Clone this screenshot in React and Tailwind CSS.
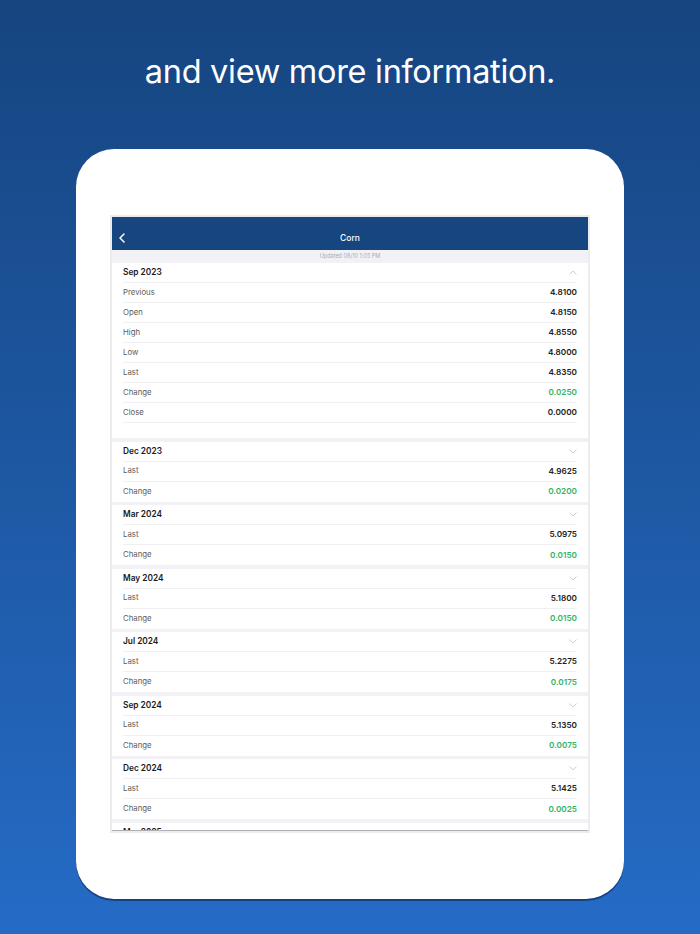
import React from "react";

const sections = [
  {
    title: "Sep 2023",
    open: true,
    rows: [
      ["Previous", "4.8100"],
      ["Open", "4.8150"],
      ["High", "4.8550"],
      ["Low", "4.8000"],
      ["Last", "4.8350"],
      ["Change", "0.0250", true],
      ["Close", "0.0000"],
    ],
  },
  { title: "Dec 2023", rows: [["Last", "4.9625"], ["Change", "0.0200", true]] },
  { title: "Mar 2024", rows: [["Last", "5.0975"], ["Change", "0.0150", true]] },
  { title: "May 2024", rows: [["Last", "5.1800"], ["Change", "0.0150", true]] },
  { title: "Jul 2024", rows: [["Last", "5.2275"], ["Change", "0.0175", true]] },
  { title: "Sep 2024", rows: [["Last", "5.1350"], ["Change", "0.0075", true]] },
  { title: "Dec 2024", rows: [["Last", "5.1425"], ["Change", "0.0025", true]] },
  { title: "Mar 2025", rows: [["Last", "5.1900"], ["Change", "0.0025", true]] },
];

function Chevron({ up }) {
  return (
    <svg width="8" height="5" viewBox="0 0 8 5" className="block">
      <path
        d={up ? "M0.5 4.5 L4 1 L7.5 4.5" : "M0.5 0.5 L4 4 L7.5 0.5"}
        fill="none"
        stroke="#c8c8cc"
        strokeWidth="0.9"
      />
    </svg>
  );
}

function Section({ s, first }) {
  return (
    <div className={first ? "bg-white" : "bg-white mt-[3.5px]"}>
      <div className="ml-[11px] mr-[11px] h-[20px] flex items-center justify-between border-b border-[#f0f0f2]">
        <span className="text-[8.3px] font-semibold text-[#1a1a1a]">{s.title}</span>
        <Chevron up={s.open} />
      </div>
      {s.rows.map((r, i) => {
        const last = i === s.rows.length - 1;
        return (
          <div
            key={r[0]}
            className={
              "ml-[11px] mr-[11px] h-[20px] flex items-center justify-between " +
              (last && !s.open ? "" : "border-b border-[#f0f0f2]")
            }
          >
            <span className="text-[7.8px] text-[#5c5c5c]">{r[0]}</span>
            <span
              className={
                "text-[8.2px] font-semibold " + (r[2] ? "text-[#34b368]" : "text-[#222222]")
              }
            >
              {r[1]}
            </span>
          </div>
        );
      })}
      {s.open && <div className="h-[15px]" />}
    </div>
  );
}

export default function App() {
  return (
    <div
      className="w-full h-[934px] overflow-hidden flex flex-col items-center bg-gradient-to-b from-[#164580] to-[#256bc6]"
      style={{ fontFamily: "Inter, 'Noto Sans', sans-serif" }}
    >
      <h1 className="mt-[50px] h-[44px] leading-[44px] text-white text-[32.5px] font-normal tracking-[-0.3px]">
        and view more information.
      </h1>
      <div className="mt-[55px] w-[548px] h-[750px] rounded-[38px] bg-white pt-[66px] px-[34px] shadow-[0_2px_0_rgba(10,40,90,0.6)]">
        <div className="w-[480px] h-[618px] border-2 border-[#ececee] flex flex-col overflow-hidden">
          <div className="h-[33px] bg-[#164580] flex items-center relative shrink-0 pt-[10px]">
            <svg width="6" height="10" viewBox="0 0 6 10" className="absolute left-[7px] top-[16px]">
              <path d="M5 1 L1 5 L5 9" fill="none" stroke="white" strokeWidth="1.5" strokeLinecap="round" strokeLinejoin="round" />
            </svg>
            <div className="w-full text-center text-white text-[8.5px] font-medium">Corn</div>
          </div>
          <div className="h-[13px] bg-[#f2f2f6] flex items-center justify-center shrink-0">
            <span className="text-[5.5px] text-[#a9a9ae]">Updated 08/10 1:05 PM</span>
          </div>
          <div className="flex-1 bg-[#f2f2f6] overflow-hidden border-b border-[#b0b0b4]">
            {sections.map((s, i) => (
              <Section key={s.title} s={s} first={i === 0} />
            ))}
          </div>
        </div>
      </div>
    </div>
  );
}
